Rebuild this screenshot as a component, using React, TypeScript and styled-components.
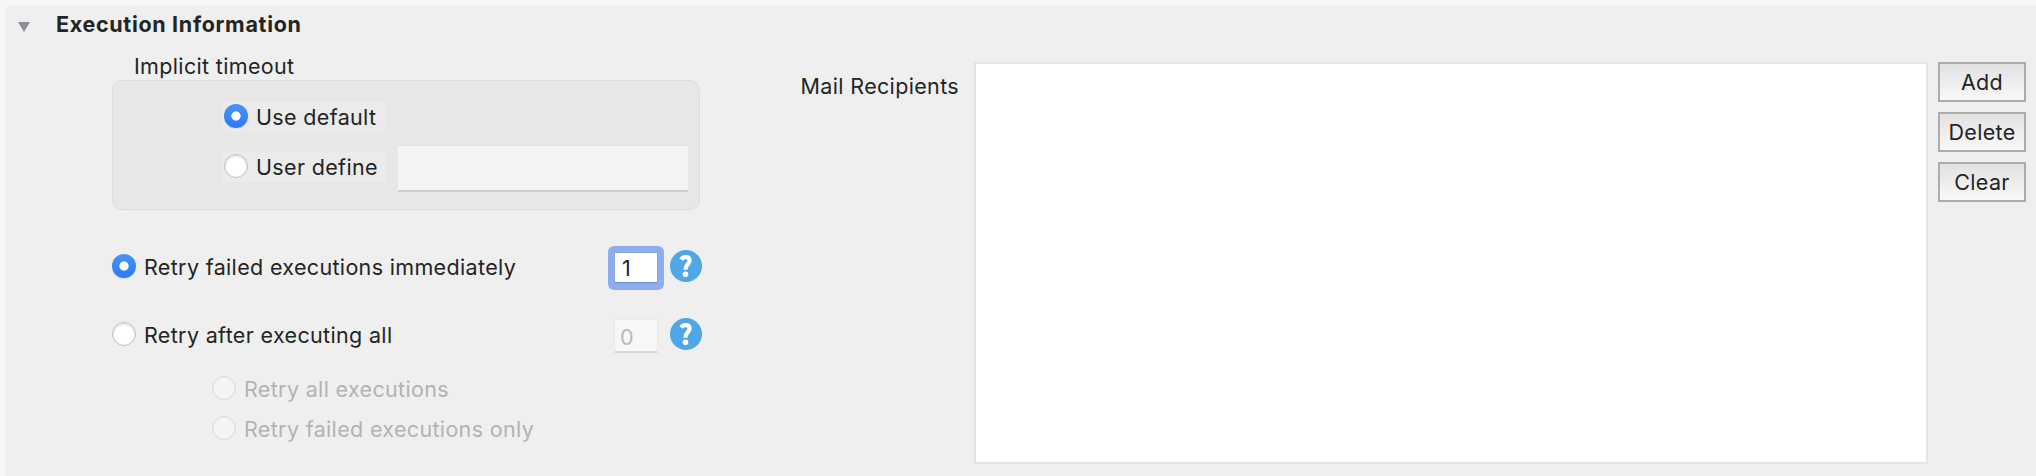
import React from "react";
import styled, { createGlobalStyle, css } from "styled-components";

const GlobalStyle = createGlobalStyle`
  * { box-sizing: border-box; }
  body {
    margin: 0;
    background: #f6f6f6;
    color: #242424;
    font: 400 21.5px/30px Inter, "Liberation Sans", sans-serif;
    letter-spacing: 0.34px;
  }
`;

const Page = styled.div`
  height: 476px;
  padding: 6px 0 0 6px;
  overflow: hidden;
`;

const Section = styled.section`
  height: 470px;
  background: #efefef;
`;

const Header = styled.header`
  display: flex;
  align-items: center;
  height: 36px;
  padding-left: 12px;
  gap: 26px;
`;

const Disclosure = styled.svg`
  display: block;
  margin-top: 5px;
`;

const Title = styled.h2`
  margin: 0;
  font-size: 21.5px;
  font-weight: 700;
  line-height: 36px;
  letter-spacing: 0.68px;
  white-space: nowrap;
`;

const Columns = styled.div`
  display: flex;
  align-items: flex-start;
  padding-left: 106px;
`;

const Options = styled.div`
  width: 590px;
  padding-top: 14px;
`;

const GroupLabel = styled.div`
  height: 24px;
  padding-left: 22px;
  line-height: 20px;
`;

const Group = styled.div`
  width: 588px;
  height: 130px;
  padding: 21px 11px 0 109px;
  background: #e7e7e7;
  border: 1px solid #dcdcdc;
  border-radius: 10px;
`;

const GroupRow = styled.div`
  display: flex;
  align-items: flex-start;
  height: 43px;
  gap: 12px;
`;

const Radio = styled.label<{ $boxed?: boolean; $disabled?: boolean; $offset?: number }>`
  display: flex;
  align-items: center;
  flex: none;
  height: 30px;
  gap: 8px;
  margin-top: ${(p) => p.$offset ?? 0}px;
  white-space: nowrap;
  color: ${(p) => (p.$disabled ? "#b3b3b3" : "#242424")};
  ${(p) =>
    p.$boxed &&
    css`
      width: 164px;
      padding-left: 2px;
      background: #ebebeb;
    `}
`;

const Dot = styled.span<{ $on?: boolean; $disabled?: boolean }>`
  flex: none;
  width: 24px;
  height: 24px;
  margin-top: -2px;
  border-radius: 50%;
  ${(p) =>
    p.$on
      ? css`
          background: radial-gradient(circle, #fff 4.2px, transparent 5px),
            linear-gradient(#4894f8, #2d78f6);
          box-shadow: 0 1px 1px #cbdcf5;
        `
      : css`
          background: ${p.$disabled ? "#f5f5f5" : "#fff"};
          border: 1px solid ${p.$disabled ? "#d9d9d9" : "#c2c2c2"};
          box-shadow: inset 0 1px 3px ${p.$disabled ? "#ebebeb" : "#d5d5d5"};
        `}
`;

const TextField = styled.div`
  width: 290px;
  height: 47px;
  background: #f3f3f3;
  border-top: 1px solid #e0e0e0;
  border-bottom: 2px solid #cfcfcf;
`;

const RetryRow = styled.div<{ $top: number }>`
  display: flex;
  align-items: center;
  height: 44px;
  margin-top: ${(p) => p.$top}px;
`;

const RetryLabel = styled.div`
  width: 502px;
  padding-bottom: 2px;
`;

const CountField = styled.div<{ $focused?: boolean }>`
  flex: none;
  ${(p) =>
    p.$focused
      ? css`
          width: 56px;
          height: 44px;
          margin: 0 6px 0 -6px;
          padding-left: 8px;
          line-height: 33px;
          background: #fff;
          border: 6px solid #8dadee;
          border-radius: 6px;
          box-shadow: inset 0 0 0 1px #82a4e8, inset 0 -2px 0 #7596d8;
        `
      : css`
          width: 44px;
          height: 34px;
          margin-right: 12px;
          padding-left: 5px;
          line-height: 34px;
          color: #b9b9b9;
          background: #f7f7f7;
          border: 1px solid #eaeaea;
          border-bottom: 2px solid #d9d9d9;
        `}
`;

const HelpSvg = styled.svg`
  display: block;
  flex: none;
  margin-top: -4px;
`;

const SubOptions = styled.div`
  display: grid;
  gap: 10px;
  margin-top: 16px;
  padding-left: 100px;
`;

const MailLabel = styled.div`
  width: 272px;
  padding: 29px 15px 0 0;
  text-align: right;
  white-space: nowrap;
`;

const Recipients = styled.div`
  width: 954px;
  height: 402px;
  margin-top: 20px;
  background: #fff;
  border: 2px solid #e4e4e4;
`;

const Actions = styled.div`
  display: grid;
  gap: 10px;
  margin: 20px 0 0 10px;
`;

const Button = styled.button`
  width: 88px;
  height: 40px;
  padding: 0 0 1px;
  border: 2px solid #acacac;
  background: linear-gradient(#e2e2e2, #f8f8f8);
  color: #242424;
  font: inherit;
  letter-spacing: 0.3px;
`;

function Help() {
  return (
    <HelpSvg width="32" height="32" viewBox="0 0 32 32">
      <circle cx="16" cy="16" r="16" fill="#50a7e8" />
      <path
        d="M11.2 9.6C12.2 8 13.8 7.2 15.8 7.2C18.3 7.2 19.6 8.6 19.6 10.7C19.6 14.2 15.5 14 15.5 19.8"
        fill="none"
        stroke="#fff"
        strokeWidth="4.2"
      />
      <circle cx="15.5" cy="24.2" r="2.8" fill="#fff" />
    </HelpSvg>
  );
}

export default function App() {
  return (
    <>
      <GlobalStyle />
      <Page>
        <Section>
          <Header>
            <Disclosure width="12" height="10" viewBox="0 0 12 10">
              <path d="M0 0H12L6 10Z" fill="#8b8f98" />
            </Disclosure>
            <Title>Execution Information</Title>
          </Header>
          <Columns>
            <Options>
              <GroupLabel>Implicit timeout</GroupLabel>
              <Group>
                <GroupRow>
                  <Radio $boxed>
                    <Dot $on />
                    Use default
                  </Radio>
                </GroupRow>
                <GroupRow>
                  <Radio $boxed $offset={7}>
                    <Dot />
                    User define
                  </Radio>
                  <TextField />
                </GroupRow>
              </Group>
              <RetryRow $top={36}>
                <RetryLabel>
                  <Radio>
                    <Dot $on />
                    Retry failed executions immediately
                  </Radio>
                </RetryLabel>
                <CountField $focused>1</CountField>
                <Help />
              </RetryRow>
              <RetryRow $top={24}>
                <RetryLabel>
                  <Radio>
                    <Dot />
                    Retry after executing all
                  </Radio>
                </RetryLabel>
                <CountField>0</CountField>
                <Help />
              </RetryRow>
              <SubOptions>
                <Radio $disabled>
                  <Dot $disabled />
                  Retry all executions
                </Radio>
                <Radio $disabled>
                  <Dot $disabled />
                  Retry failed executions only
                </Radio>
              </SubOptions>
            </Options>
            <MailLabel>Mail Recipients</MailLabel>
            <Recipients />
            <Actions>
              <Button>Add</Button>
              <Button>Delete</Button>
              <Button>Clear</Button>
            </Actions>
          </Columns>
        </Section>
      </Page>
    </>
  );
}
